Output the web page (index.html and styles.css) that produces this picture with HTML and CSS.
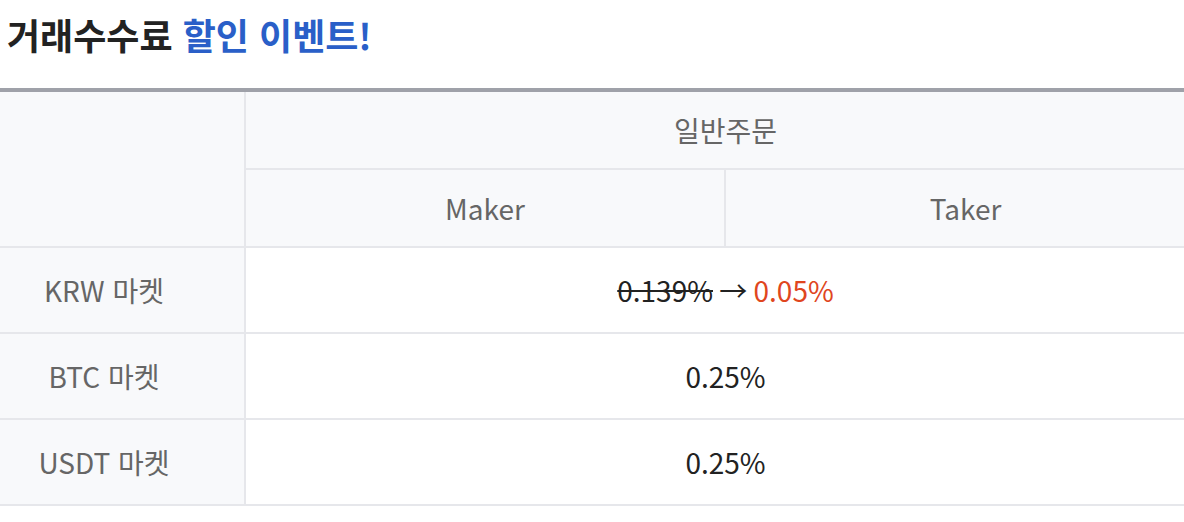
FILE: index.html
```html
<!DOCTYPE html>
<html lang="ko">
<head>
    <meta charset="UTF-8">
    <meta name="viewport" content="width=device-width, initial-scale=1.0">
    <title>거래수수료 할인 이벤트</title>
    <link rel="stylesheet" href="styles.css">
</head>
<body>

    <!-- Event title -->
    <div class="title">
        <h1>거래수수료 <span class="highlight">할인 이벤트!</span></h1>
    </div>

    <!-- Fee table (wider than the window, cropped on both sides) -->
    <div class="table-wrap">
        <table class="fee-table">
            <colgroup>
                <col class="col-market">
                <col class="col-maker">
                <col class="col-taker">
            </colgroup>
            <thead>
                <tr class="group-row">
                    <th rowspan="2"></th>
                    <th colspan="2">일반주문</th>
                </tr>
                <tr>
                    <th>Maker</th>
                    <th>Taker</th>
                </tr>
            </thead>
            <tbody>
                <tr>
                    <th>KRW 마켓</th>
                    <td colspan="2"><del>0.139%</del> → <span class="discount">0.05%</span></td>
                </tr>
                <tr>
                    <th>BTC 마켓</th>
                    <td colspan="2">0.25%</td>
                </tr>
                <tr>
                    <th>USDT 마켓</th>
                    <td colspan="2">0.25%</td>
                </tr>
            </tbody>
        </table>
    </div>

</body>
</html>
```

FILE: styles.css
```css
/* Basic styling for the page */
body {
    font-family: "Noto Sans CJK KR", "Noto Sans", sans-serif;
    margin: 0;
    padding: 0;
    background-color: #ffffff;
    color: #222222;
    overflow: hidden;
}

/* Title */
.title {
    height: 88px;
    padding-left: 7px;
}

.title h1 {
    margin: 0;
    padding-top: 12px;
    font-size: 36px;
    line-height: 44px;
    font-weight: 700;
    color: #222222;
}

.highlight {
    color: #2a5fc8;
}

/* Fee table */
.table-wrap {
    overflow: hidden;
}

.fee-table {
    width: 1241px;
    margin-left: -36px;
    border-collapse: collapse;
    border-top: 4px solid #9fa1a9;
    font-size: 28px;
    table-layout: fixed;
}

.col-market {
    width: 281px;
}

.col-maker {
    width: 480px;
}

.fee-table th,
.fee-table td {
    border: 2px solid #e6e7eb;
    text-align: center;
    padding: 0;
}

.fee-table tr > :first-child {
    border-left: none;
}

.fee-table tr > :last-child {
    border-right: none;
}

.fee-table th {
    background-color: #f8f9fb;
    color: #666666;
    font-weight: 400;
}

.fee-table thead tr {
    height: 78px;
}

.fee-table thead .group-row {
    height: 79px;
}

.fee-table tbody tr {
    height: 86px;
}

.fee-table td {
    color: #222222;
}

.fee-table del {
    text-decoration-thickness: 2px;
}

.discount {
    color: #e0461e;
}
```
